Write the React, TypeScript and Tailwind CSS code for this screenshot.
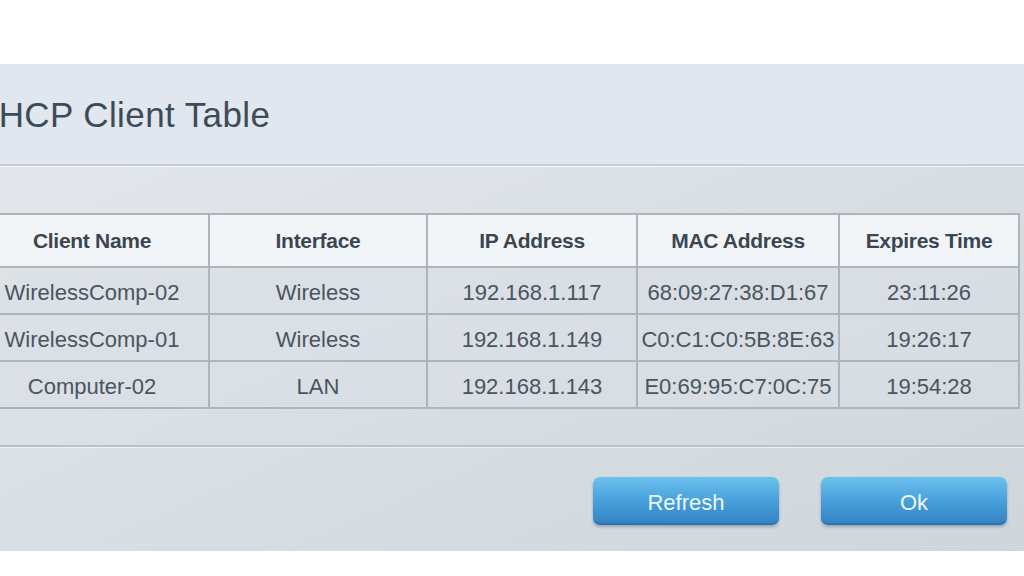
import React from 'react';

const columns = [
  { label: 'Client Name', width: 'w-[234px]' },
  { label: 'Interface', width: 'w-[218px]' },
  { label: 'IP Address', width: 'w-[210px]' },
  { label: 'MAC Address', width: 'w-[202px]' },
  { label: 'Expires Time', width: 'w-[180px]' },
];

const clients = [
  ['WirelessComp-02', 'Wireless', '192.168.1.117', '68:09:27:38:D1:67', '23:11:26'],
  ['WirelessComp-01', 'Wireless', '192.168.1.149', 'C0:C1:C0:5B:8E:63', '19:26:17'],
  ['Computer-02', 'LAN', '192.168.1.143', 'E0:69:95:C7:0C:75', '19:54:28'],
];

const DialogButton = ({ label }: { label: string }) => (
  <button className="w-[186px] h-[48px] pt-[5px] rounded-[7px] bg-gradient-to-b from-[#6cc2ee] via-[#48a1dc] to-[#3584c3] border-b-2 border-[#2c72ab] shadow-[0_2px_3px_rgba(40,70,100,0.35)] text-[22px] text-[#eef7fc] leading-none">
    {label}
  </button>
);

const App = () => {
  return (
    <div className="w-[1024px] h-[576px] bg-white overflow-hidden pt-[64px] font-['Liberation_Sans',Arial,sans-serif]">
      <div className="-ml-[50px] w-[1100px] h-[487px] flex flex-col bg-gradient-to-br from-[#e6eaee] via-[#dadfe4] to-[#cfd5da]">
        <div className="h-[100px] shrink-0 bg-[#e1e7ee] flex items-center pl-[23px] pt-[2px]">
          <h1 className="text-[35px] text-[#3d4b57] tracking-[0.4px]">DHCP Client Table</h1>
        </div>
        <div className="h-[2px] bg-[#c6ced6]" />
        <div className="h-[1px] bg-[#f4f6f8]" />

        <div className="pl-[24px] pt-[46px]">
          <table className="border-collapse border-2 border-[#a6b0b8] text-center">
            <thead>
              <tr className="h-[53px] bg-[#f2f5f8]">
                {columns.map((c) => (
                  <th
                    key={c.label}
                    className={`${c.width} border-2 border-[#acb5bd] text-[21px] font-bold text-[#3a4651] tracking-[-0.3px]`}
                  >
                    {c.label}
                  </th>
                ))}
              </tr>
            </thead>
            <tbody>
              {clients.map((row) => (
                <tr key={row[0]} className="h-[47px] bg-[#d8dfe5]/60">
                  {row.map((cell, i) => (
                    <td key={i} className="border-2 border-[#acb5bd] text-[22px] text-[#4a5560] px-0 pt-[3px]">
                      {cell}
                    </td>
                  ))}
                </tr>
              ))}
            </tbody>
          </table>
        </div>

        <div className="mt-[36px] h-[2px] bg-[#b9c2ca]" />
        <div className="h-[1px] bg-[#eef1f4]" />

        <div className="flex justify-end gap-[42px] pr-[43px] pt-[29px]">
          <DialogButton label="Refresh" />
          <DialogButton label="Ok" />
        </div>
      </div>
    </div>
  );
};

export default App;
